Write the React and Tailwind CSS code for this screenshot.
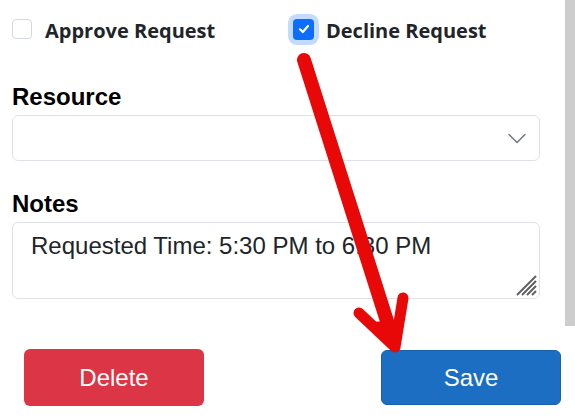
import React from "react";

export default function App() {
  return (
    <div className="relative flex w-[575px] h-[420px] bg-white overflow-hidden">
      <div className="w-[565px] shrink-0 flex flex-col px-3">
        {/* checkboxes row */}
        <div className="flex items-center h-[58px]">
          <div className="flex items-center w-[281px] shrink-0">
            <div className="w-[20px] h-[20px] rounded-[4px] border border-[#d5d9de] bg-white" />
            <span
              className="ml-[13px] mt-[4px] text-[20px] font-bold text-[#212529] leading-none"
              style={{ fontFamily: '"Open Sans", "Noto Sans", sans-serif' }}
            >
              Approve Request
            </span>
          </div>
          <div className="flex items-center">
            <div className="w-[21px] h-[21px] rounded-[4px] bg-[#0d6efd] flex items-center justify-center shadow-[0_0_0_5px_rgba(13,110,253,0.25)]">
              <svg width="14" height="14" viewBox="0 0 14 14" fill="none">
                <path d="M3 7.3 L5.8 10 L11 4" stroke="white" strokeWidth="2.2" strokeLinecap="round" strokeLinejoin="round" />
              </svg>
            </div>
            <span
              className="ml-[12px] mt-[4px] text-[20px] font-bold text-[#212529] leading-none"
              style={{ fontFamily: '"Open Sans", "Noto Sans", sans-serif' }}
            >
              Decline Request
            </span>
          </div>
        </div>

        <div
          className="mt-[25px] text-[24px] leading-[28px] font-bold text-black"
          style={{ fontFamily: '"Liberation Sans", Arial, sans-serif' }}
        >
          Resource
        </div>
        <div className="mt-[4px] w-[528px] h-[46px] rounded-[6px] border border-[#dee2e6] bg-white flex items-center justify-end pr-[13px]">
          <svg width="18" height="11" viewBox="0 0 18 11" fill="none">
            <path d="M1 1.5 L9 9.5 L17 1.5" stroke="#6c757d" strokeWidth="1.4" strokeLinecap="round" strokeLinejoin="round" />
          </svg>
        </div>

        <div
          className="mt-[29px] text-[24px] leading-[28px] font-bold text-black"
          style={{ fontFamily: '"Liberation Sans", Arial, sans-serif' }}
        >
          Notes
        </div>
        <div className="relative mt-[4px] w-[528px] h-[77px] rounded-[6px] border border-[#dee2e6] bg-white pl-[18px] pt-[9px]">
          <span
            className="text-[24px] leading-[28px] text-[#212529]"
            style={{ fontFamily: '"Liberation Sans", Arial, sans-serif' }}
          >
            Requested Time: 5:30 PM to 6:30 PM
          </span>
          <svg className="absolute right-[1px] bottom-[1px]" width="24" height="24" viewBox="0 0 24 24" fill="none">
            <path d="M3 22 L22 3" stroke="#5f5f5f" strokeWidth="2" />
            <path d="M8 22 L22 8" stroke="#5f5f5f" strokeWidth="2" />
            <path d="M13 22 L22 13" stroke="#5f5f5f" strokeWidth="2" />
            <path d="M18 22 L22 18" stroke="#5f5f5f" strokeWidth="2" />
          </svg>
        </div>

        <div className="mt-[50px] flex items-start">
          <button
            className="shrink-0 ml-[12px] w-[180px] h-[57px] rounded-[6px] bg-[#dc3545] text-white text-[24px]"
            style={{ fontFamily: '"Liberation Sans", Arial, sans-serif' }}
          >
            Delete
          </button>
          <button
            className="shrink-0 ml-[177px] mt-[1px] w-[180px] h-[55px] rounded-[6px] bg-[#1b6ec2] border border-[#1861ac] text-white text-[24px]"
            style={{ fontFamily: '"Liberation Sans", Arial, sans-serif' }}
          >
            Save
          </button>
        </div>
      </div>
      <div className="w-[10px] shrink-0">
        <div className="w-[10px] h-[326px] bg-[#cdcdcd]" />
      </div>

      <svg className="absolute left-0 top-0 pointer-events-none" width="575" height="420" viewBox="0 0 575 420" fill="none">
        <path d="M304 60 L393 340" stroke="#e90808" strokeWidth="14" strokeLinecap="round" />
        <path d="M359 313 L395 347 L403 298" stroke="#e90808" strokeWidth="11" strokeLinecap="round" strokeLinejoin="round" />
        <path d="M372 322 L395 347 L399 320 Z" fill="#e90808" />
      </svg>
    </div>
  );
}
